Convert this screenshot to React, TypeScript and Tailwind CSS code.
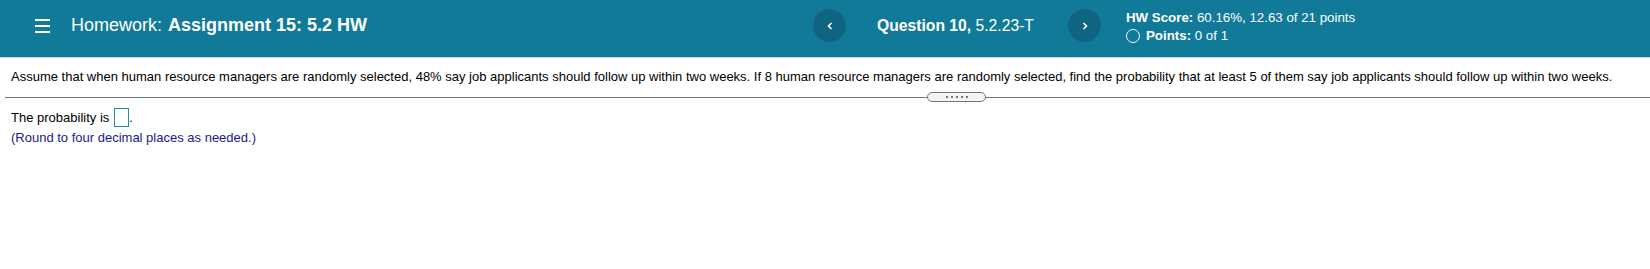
export default function App() {
  return (
    <div className="h-[269px] w-[1650px] bg-white font-['Liberation_Sans',Arial,sans-serif]">
      {/* Top bar */}
      <div className="flex h-[57px] items-center bg-[#127a99] pb-[6px] pl-[35px] text-white">
        <div className="flex w-[778px] items-center">
          <div className="flex w-[15px] flex-col gap-[4px] pt-[1px]">
            <span className="h-[2px] bg-white" />
            <span className="h-[2px] bg-white" />
            <span className="h-[2px] bg-white" />
          </div>
          <div className="ml-[21px] text-[18px]">
            Homework:<span className="ml-[6px] font-bold">Assignment 15: 5.2 HW</span>
          </div>
        </div>
        <button className="grid h-[33px] w-[33px] place-items-center rounded-full bg-[#0f6482]">
          <svg width="8" height="10" viewBox="0 0 8 10">
            <path d="M5.5 2 L2.5 5 L5.5 8" fill="none" stroke="white" strokeWidth="1.6" />
          </svg>
        </button>
        <div className="ml-[31px] w-[160px] shrink-0 whitespace-nowrap text-[15.7px]">
          <span className="font-bold">Question 10,</span> 5.2.23-T
        </div>
        <button className="ml-[31px] grid h-[33px] w-[33px] place-items-center rounded-full bg-[#0f6482]">
          <svg width="8" height="10" viewBox="0 0 8 10">
            <path d="M2.5 2 L5.5 5 L2.5 8" fill="none" stroke="white" strokeWidth="1.6" />
          </svg>
        </button>
        <div className="ml-[25px] mt-[3px] flex flex-col text-[13.3px] leading-[18px]">
          <div className="-mt-[1px]">
            <span className="font-bold">HW Score:</span> 60.16%, 12.63 of 21 points
          </div>
          <div className="flex items-center">
            <span className="mr-[6px] h-[14px] w-[14px] rounded-full border-[1.5px] border-white" />
            <span className="font-bold">Points:</span>&nbsp;0 of 1
          </div>
        </div>
      </div>
      <div className="h-px bg-[#cfd4d8]" />

      {/* Question */}
      <div className="pt-[11px] text-[13px] leading-4 text-black">
        <p className="pl-[11px]">
          Assume that when human resource managers are randomly selected, 48% say job applicants should follow up within
          two weeks. If 8 human resource managers are randomly selected, find the probability that at least 5 of them say
          job applicants should follow up within two weeks.
        </p>
        <div className="mt-[7px] flex items-center pl-[5px]">
          <div className="h-px w-[922px] bg-[#6b7780]" />
          <div className="flex h-[10px] w-[59px] items-center justify-center gap-[3px] rounded-full border border-[#6b7780] bg-[#f2f4f6]">
            <span className="h-[2px] w-[2px] bg-[#6b7780]" />
            <span className="h-[2px] w-[2px] bg-[#6b7780]" />
            <span className="h-[2px] w-[2px] bg-[#6b7780]" />
            <span className="h-[2px] w-[2px] bg-[#6b7780]" />
            <span className="h-[2px] w-[2px] bg-[#6b7780]" />
          </div>
          <div className="h-px flex-1 bg-[#6b7780]" />
        </div>
        <div className="mt-[6px] flex items-center pl-[11px]">
          The probability is
          <span className="ml-[5px] inline-block h-[19px] w-[15px] border border-[#2a88ad]" />.
        </div>
        <p className="mt-[3px] pl-[11px] text-[#1a1a8f]">(Round to four decimal places as needed.)</p>
      </div>
    </div>
  );
}
